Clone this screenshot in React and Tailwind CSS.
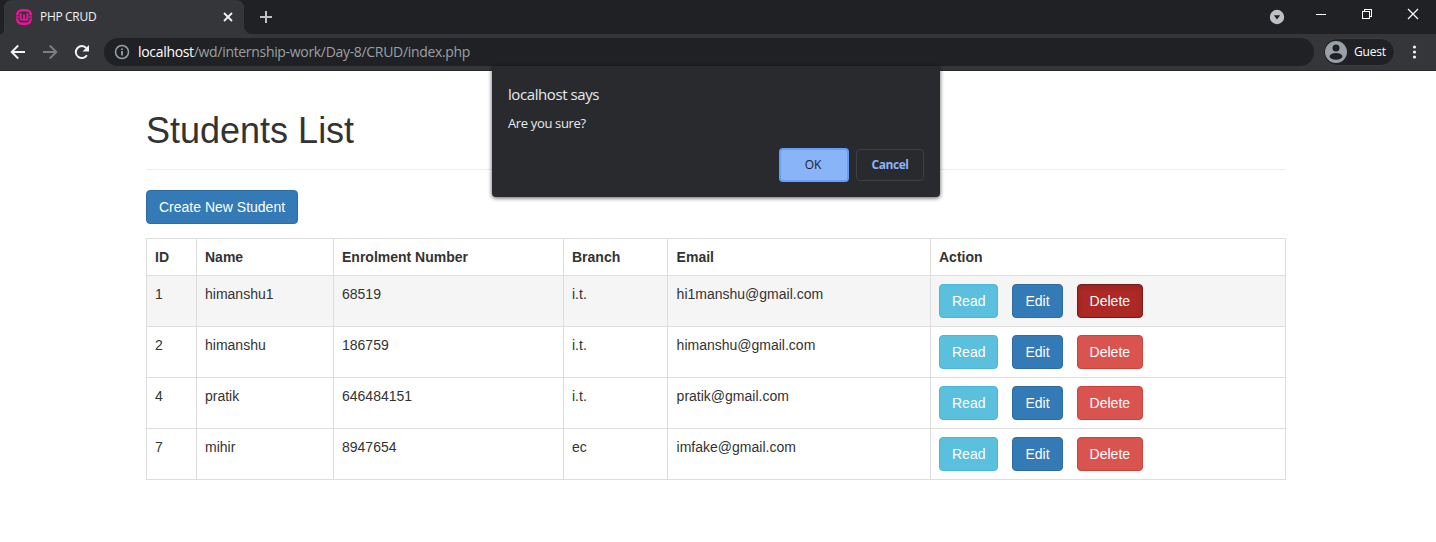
const rows = [
  [1, 'himanshu1', '68519', 'i.t.', 'hi1manshu@gmail.com'],
  [2, 'himanshu', '186759', 'i.t.', 'himanshu@gmail.com'],
  [4, 'pratik', '646484151', 'i.t.', 'pratik@gmail.com'],
  [7, 'mihir', '8947654', 'ec', 'imfake@gmail.com'],
];
const columns = ['ID', 'Name', 'Enrolment Number', 'Branch', 'Email', 'Action'];

function Favicon() {
  return (
    <svg className="size-4" viewBox="0 0 16 16" fill="none" stroke="#f0109c">
      <path d="M1.200 6.600C1.200 3 3 1.300 6 1.300h4c3 0 4.800 1.700 4.800 5.300M1.200 9.400c0 3.600 1.800 5.300 4.800 5.300h4c3 0 4.800-1.700 4.800-5.300" strokeWidth="2.400" />
      <path d="M0 8h3.200M12.800 8H16" strokeWidth="1.500" />
      <path d="M4.600 4.200v5a1.700 1.700 0 0 0 3.400 0V5.500M8 9.200a1.700 1.700 0 0 0 3.400 0v-5" strokeWidth="1.900" />
    </svg>
  );
}

function TabStrip() {
  return (
    <div className="flex h-[34px] bg-[#202124]">
      <div className="flex w-1 items-end overflow-hidden bg-[#35363a]">
        <div className="h-[34px] w-full rounded-br-md bg-[#202124]" />
      </div>
      <div className="flex w-[240px] items-center rounded-t-lg bg-[#35363a] pr-[10px] pl-3">
        <Favicon />
        <span className="ml-2 flex-1 text-[12px] tracking-[-0.32px] whitespace-nowrap text-[#f1f3f4]">PHP CRUD</span>
        <svg className="size-3" viewBox="0 0 12 12" stroke="#f1f3f4" strokeWidth="1.8">
          <path d="M2 2l8 8M10 2l-8 8" />
        </svg>
      </div>
      <div className="w-2 bg-[#35363a]">
        <div className="h-full w-full rounded-bl-lg bg-[#202124]" />
      </div>
      <svg className="mt-[10px] ml-[7px] size-[14px]" viewBox="0 0 14 14" stroke="#bdc1c6" strokeWidth="2">
        <path d="M7 1v12M1 7h12" />
      </svg>
      <svg className="mt-[9px] ml-auto h-4 w-4" viewBox="0 0 16 16">
        <circle cx="8" cy="8" r="7.2" fill="#bdc1c6" />
        <path d="M4.8 6.2h6.4L8 10.6z" fill="#202124" />
      </svg>
      <svg className="ml-[31px] h-7 w-[120px]" viewBox="0 0 120 28" fill="none" stroke="#fff" shapeRendering="crispEdges">
        <path d="M0 14.5h10" />
        <path d="M46.500 11.500h7v7h-7zM48.500 11v-1.500h7v7H54" />
        <path d="M92 9l10 10M102 9L92 19" shapeRendering="geometricPrecision" strokeWidth="1.2" />
      </svg>
    </div>
  );
}

function Toolbar() {
  return (
    <div className="flex h-[37px] items-center border-b border-[#28292c] bg-[#35363a]">
      <svg className="ml-[10px] size-4" viewBox="0 0 16 16" fill="none" stroke="#f1f3f4" strokeWidth="1.9">
        <path d="M15 8H2M8.200 1.500L1.700 8l6.500 6.500" />
      </svg>
      <svg className="ml-4 size-4" viewBox="0 0 16 16" fill="none" stroke="#7c7e82" strokeWidth="1.900">
        <path d="M1 8h13M7.800 1.500L14.300 8l-6.500 6.500" />
      </svg>
      <svg className="ml-4 size-4" viewBox="0 0 16 16">
        <path d="M12.900 11.300A6 6 0 1 1 12.400 4.200" fill="none" stroke="#f1f3f4" strokeWidth="2" />
        <path d="M15 1v6.500H8.500z" fill="#f1f3f4" />
      </svg>
      <div className="ml-[14px] flex h-7 w-[1210px] items-center rounded-full bg-[#202124] pl-[10px]">
        <svg className="size-4" viewBox="0 0 16 16" fill="none" stroke="#9aa0a6" strokeWidth="1.500">
          <circle cx="8" cy="8" r="6.500" />
          <path d="M8 7v4.500M8 4.400v1.600" strokeWidth="1.800" />
        </svg>
        <span className="ml-2 pb-px text-[14px] tracking-[-0.32px] whitespace-nowrap text-[#9aa0a6]">
          <span className="text-white">localhost</span>/wd/internship-work/Day-8/CRUD/index.php
        </span>
      </div>
      <div className="ml-[9px] flex h-7 w-[72px] items-center rounded-full border border-[#3c3d41] bg-[#202124] pl-[1px]">
        <svg className="size-[22px]" viewBox="0 0 22 22">
          <circle cx="11" cy="11" r="11" fill="#9aa0a6" />
          <circle cx="11" cy="7" r="3.500" fill="#202124" />
          <ellipse cx="11" cy="15.400" rx="6.400" ry="3.400" fill="#202124" />
        </svg>
        <span className="ml-[7px] text-[12px] font-medium tracking-[-0.2px] text-white">Guest</span>
      </div>
      <svg className="ml-[17px] h-4 w-4" viewBox="0 0 16 16" fill="#f1f3f4">
        <circle cx="2.500" cy="3" r="1.600" />
        <circle cx="2.500" cy="8" r="1.600" />
        <circle cx="2.500" cy="13" r="1.600" />
      </svg>
    </div>
  );
}

function ConfirmDialog() {
  return (
    <div className="absolute top-[66px] left-[492px] h-[131px] w-[448px] rounded bg-[#292a2d] px-4 pt-[17px] font-['Open_Sans',sans-serif] text-[#e8eaed] shadow-[0_1px_4px_rgba(0,0,0,0.65)]">
      <div className="text-[15px] leading-[22px] tracking-[-0.42px]">localhost says</div>
      <div className="mt-[9px] text-[13px] leading-[18px] tracking-[-0.35px]">Are you sure?</div>
      <div className="mt-4 -mr-px flex items-center justify-end gap-[7px] text-[12px]">
        <button className="h-[34px] w-[70px] rounded border-2 border-[#669df6] bg-[#8ab4f8] pr-[2px] tracking-[-0.2px] text-[#202124]">OK</button>
        <button className="mr-px h-8 w-[68px] rounded border border-[#3c4043] font-bold tracking-[-0.45px] text-[#8ab4f8]">Cancel</button>
      </div>
    </div>
  );
}

const button = 'h-[34px] rounded border px-3 text-[14px] leading-5 text-white ';

export default function App() {
  return (
    <div className="relative h-[542px] w-[1436px] overflow-hidden bg-white">
      <header className="font-['Open_Sans',sans-serif]">
        <TabStrip />
        <Toolbar />
      </header>
      <main className="mx-auto w-[1140px] -translate-x-[2px] pt-10 font-['Liberation_Sans',Arial,sans-serif] text-[14px] leading-5 text-[#333]">
        <h1 className="text-[36px] leading-[39px]">Students List</h1>
        <hr className="mt-[19px] border-[#eee]" />
        <button className={button + 'mt-5 block border-[#2e6da4] bg-[#337ab7]'}>Create New Student</button>
        <table className="mt-[14px] w-full table-fixed border-collapse border border-[#ddd]">
          <colgroup>
            <col className="w-[50px]" />
            <col className="w-[137px]" />
            <col className="w-[230px]" />
            <col className="w-[104px]" />
            <col className="w-[263px]" />
            <col />
          </colgroup>
          <thead>
            <tr className="h-[37px]">
              {columns.map((c) => (
                <th key={c} className="border border-[#ddd] p-2 text-left font-bold nth-[5]:pl-[8.6px]">{c}</th>
              ))}
            </tr>
          </thead>
          <tbody>
            {rows.map((row, i) => (
              <tr key={row[0]} className={i === 0 ? 'h-[51px] bg-[#f5f5f5]' : 'h-[51px]'}>
                {row.map((cell, j) => (
                  <td key={j} className="border border-[#ddd] p-2 align-top nth-[5]:pl-[8.6px]">{cell}</td>
                ))}
                <td className="border border-[#ddd] p-2 align-top">
                  <div className="flex gap-[14px]">
                    <button className={button + 'border-[#46b8da] bg-[#5bc0de]'}>Read</button>
                    <button className={button + 'border-[#2e6da4] bg-[#337ab7]'}>Edit</button>
                    <button
                      className={
                        button +
                        (i === 0
                          ? 'border-[#761c19] bg-[#ac2925] shadow-[inset_0_3px_5px_rgba(0,0,0,0.125)]'
                          : 'border-[#d43f3a] bg-[#d9534f]')
                      }
                    >
                      Delete
                    </button>
                  </div>
                </td>
              </tr>
            ))}
          </tbody>
        </table>
      </main>
      <ConfirmDialog />
    </div>
  );
}
